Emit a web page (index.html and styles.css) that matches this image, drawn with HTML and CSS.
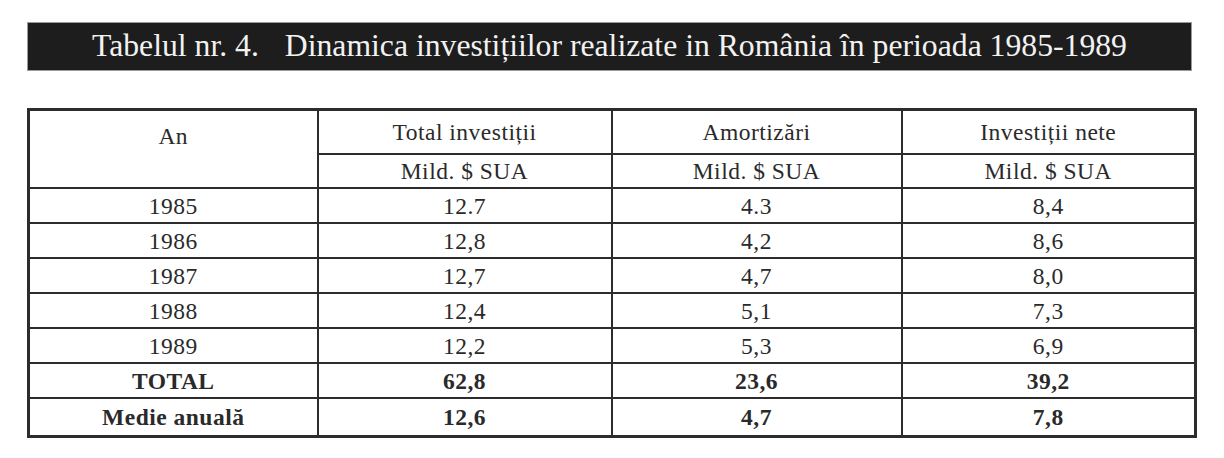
FILE: index.html
```html
<!DOCTYPE html>
<html lang="ro">
<head>
<meta charset="utf-8">
<title>Tabelul nr. 4</title>
<link rel="stylesheet" href="styles.css">
</head>
<body>
<div class="page">
  <div class="title">Tabelul nr. 4.<span class="gap"></span>Dinamica investițiilor realizate in România în perioada 1985-1989</div>
  <table class="data">
    <colgroup>
      <col class="c1"><col class="c2"><col class="c3"><col class="c4">
    </colgroup>
    <tr class="h1">
      <td rowspan="2" class="an">An</td>
      <td>Total investiții</td>
      <td>Amortizări</td>
      <td>Investiții nete</td>
    </tr>
    <tr class="h2">
      <td>Mild. $ SUA</td>
      <td>Mild. $ SUA</td>
      <td>Mild. $ SUA</td>
    </tr>
    <tr class="r"><td>1985</td><td>12.7</td><td>4.3</td><td>8,4</td></tr>
    <tr class="r"><td>1986</td><td>12,8</td><td>4,2</td><td>8,6</td></tr>
    <tr class="r"><td>1987</td><td>12,7</td><td>4,7</td><td>8,0</td></tr>
    <tr class="r"><td>1988</td><td>12,4</td><td>5,1</td><td>7,3</td></tr>
    <tr class="r"><td>1989</td><td>12,2</td><td>5,3</td><td>6,9</td></tr>
    <tr class="r bold"><td>TOTAL</td><td>62,8</td><td>23,6</td><td>39,2</td></tr>
    <tr class="r last bold"><td>Medie anuală</td><td>12,6</td><td>4,7</td><td>7,8</td></tr>
  </table>
</div>
</body>
</html>
```

FILE: styles.css
```css
html, body {
  margin: 0;
  padding: 0;
  background: #ffffff;
}

.page {
  padding: 22px 0 0 27px;
  font-family: "Liberation Serif", "DejaVu Serif", serif;
  color: #2a2a2a;
}

.title {
  box-sizing: border-box;
  width: 1165px;
  height: 49px;
  background: #1d1d1d;
  border: 1px solid #9a9a9a;
  color: #f2f2f2;
  font-size: 31.7px;
  line-height: 45px;
  text-align: center;
  white-space: nowrap;
}

.gap {
  display: inline-block;
  width: 26px;
}

.data {
  margin-top: 37px;
  width: 1167px;
  border-collapse: collapse;
  table-layout: fixed;
  border: 3px solid #2c2c2c;
  font-size: 23.5px;
  letter-spacing: 0.5px;
}

.c1 { width: 289px; }
.c2 { width: 294px; }
.c3 { width: 290px; }
.c4 { width: 294px; }

.data td {
  border: 2px solid #2c2c2c;
  text-align: center;
  padding: 0;
  line-height: 26px;
}

.h1 td { height: 42px; }
.h2 td { height: 32px; }
.r td { height: 33px; }
.r.last td { height: 36px; }

.data td.an {
  vertical-align: top;
  padding-top: 12px;
}

.bold td { font-weight: bold; }
```
